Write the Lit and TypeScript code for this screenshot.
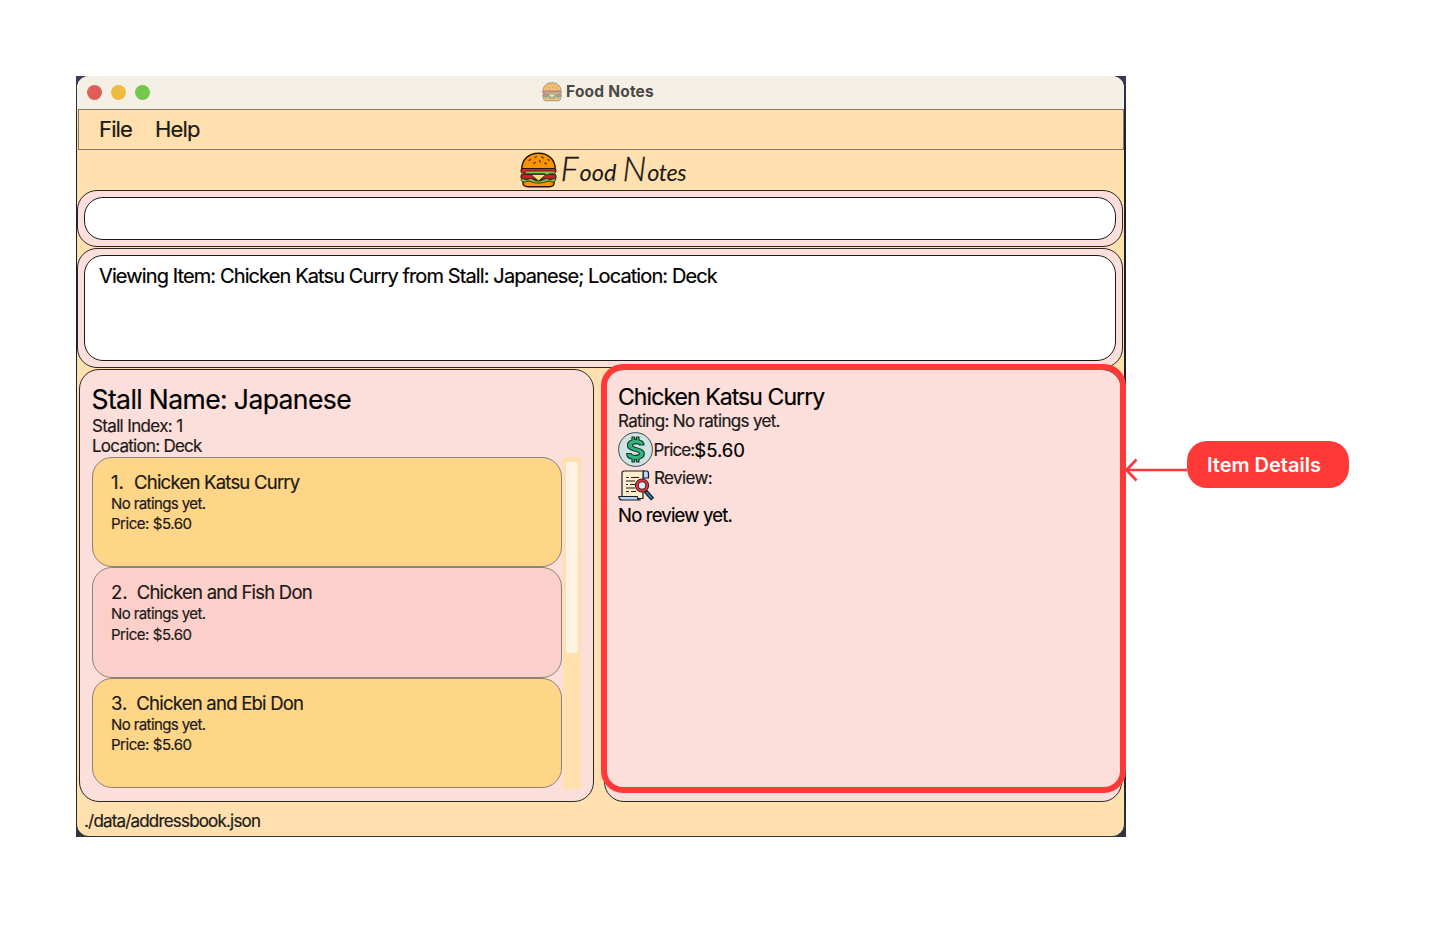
import { LitElement, html, css, svg } from "lit";
import { customElement } from "lit/decorators.js";

const burger = svg`
  <path d="M1.800 17C1.800 8 8 1.200 18.500 1.200S35.200 8 35.200 17Z" fill="#fb9200" stroke="#20160c" stroke-width="1.400"/>
  <path d="M9 8.500l1.600-1M15 5.500l1.400-.8M22 5l1.200 1M13.800 11.500l1.500-1M19.500 8.500l.8 1.400M25 11l1.300.9M28.200 7.500l.8.8" stroke="#4a2500" stroke-width="1.200" stroke-linecap="round"/>
  <rect x="1" y="16.500" width="35" height="4.500" rx="1.800" fill="#e3202f" stroke="#20160c" stroke-width="1"/>
  <rect x="1" y="22" width="35" height="5.300" rx="2" fill="#c5242f" stroke="#20160c" stroke-width="1"/>
  <path d="M8 19h25c3 0 3 2.800.5 2.800h-4c-1 0-1 1.200-2.500 1.200s-1.500-1.200-3-1.200H6c-2.500 0-1-2.800 2-2.800Z" fill="#7ccb4c" stroke="#20160c" stroke-width=".7"/>
  <path d="M3 28.500H34V31C34 33.500 32 34.700 29.500 34.700H7.500C5 34.700 3 33.500 3 31Z" fill="#fb9200" stroke="#20160c" stroke-width="1.400"/>
  <path d="M1.500 26.500c3 0 3 1.200 5 1.200s2-1.200 4-1.200 4 2.500 8 2.500 6-2.500 8-2.500 2 1.200 4 1.200 2-1.200 5-1.200c1 2-1 3.500-3 3.500s-2-1-4-1-4 2-10 2-8-2-10-2-2 1-4 1-4-1.500-3-3.500Z" fill="#7ccb4c" stroke="#20160c" stroke-width=".8"/>
  <path d="M11 22.500h15l-7.500 6.500Z" fill="#ffe07a" stroke="#20160c" stroke-width=".7"/>`;

interface Item { name: string; rating: string; price: string; }

@customElement("app-root")
export class AppRoot extends LitElement {
  private items: Item[] = [
    { name: "Chicken Katsu Curry", rating: "No ratings yet.", price: "Price: $5.60" },
    { name: "Chicken and Fish Don", rating: "No ratings yet.", price: "Price: $5.60" },
    { name: "Chicken and Ebi Don", rating: "No ratings yet.", price: "Price: $5.60" },
  ];

  static styles = css`
    :host { display: flex; box-sizing: border-box; width: 1451px; height: 940px; padding: 76px 0 0 76px; background: #fff; font-family: Inter, "Liberation Sans", sans-serif; color: #1c1a18; overflow: hidden; white-space: nowrap; }
    * { box-sizing: border-box; }
    svg { display: block; flex: none; }
    .stage { position: relative; width: 1050px; height: 761px; flex: none; padding: 0 2px 1px 1px; background: linear-gradient(#39395c, #1b1f29 60px, #1b1f29 680px, #30343d); }
    .window { display: flex; flex-direction: column; height: 760px; border-radius: 12px; overflow: hidden; background: #ffe0ae; }
    .titlebar { display: grid; grid-template-columns: 1fr auto 1fr; align-items: center; height: 33px; background: #f5f0e6; }
    .lights { display: flex; gap: 9px; padding-left: 9.500px; }
    .light { width: 15px; height: 15px; border-radius: 50%; }
    .red { background: #df5f58; } .amber { background: #eebb40; } .green { background: #75c74c; }
    .title { display: flex; align-items: center; gap: 4px; height: 31px; margin: 0 5px 2px 0; font-weight: 700; font-size: 15.500px; letter-spacing: .2px; color: #4b4946; }
    .faded { opacity: .5; }
    .menu { display: flex; gap: 23px; height: 41px; margin-left: 1px; padding-left: 20px; border: 1px solid #857a68; font-size: 22px; line-height: 39px; letter-spacing: -.85px; -webkit-text-stroke: .2px; }
    .brand { display: flex; justify-content: center; align-items: center; height: 40px; padding-left: 9px; }
    .script { display: flex; align-items: baseline; font-family: Lato, sans-serif; font-style: italic; font-weight: 400; line-height: 38px; width: 130px; margin: 3px 0 0 4px; }
    .big { font-size: 34px; font-weight: 300; -webkit-text-stroke: .3px; margin-right: 1px; }
    .low { font-size: 23.500px; }
    .food { width: 62px; }
    .otes { letter-spacing: -.5px; }
    .shell { border: 1px solid #2c2726; border-radius: 20px; background: #fcdeda; padding: 6px; margin-right: 1px; }
    .command { height: 57px; }
    .result { height: 120px; margin-top: 1px; }
    .field { height: 100%; border: 1px solid #1a1a1a; border-radius: 19px; background: #fff; color: #000; padding: 6px 14px; font-size: 20px; line-height: 28px; letter-spacing: -.89px; -webkit-text-stroke: .2px; }
    .panes { display: flex; gap: 10px; height: 434px; margin-top: 1px; padding: 0 2px; }
    .pane { border: 1px solid #2c2726; border-radius: 20px; background: #fcdeda; padding: 14px 12px 0; -webkit-text-stroke: .2px; }
    .stall { width: 515px; }
    .item { flex: 1; padding: 13px 13px 0; }
    .h1 { font-size: 26.500px; line-height: 31px; letter-spacing: -.6px; color: #000; margin-left: -.5px; }
    .meta { font-size: 17px; line-height: 20px; letter-spacing: -.65px; }
    .location { line-height: 21px; letter-spacing: -.74px; }
    .first { margin-top: 1px; }
    .list { display: flex; height: 332px; }
    .cards { width: 470px; }
    .card { height: 110.500px; border: 1px solid #8a8378; border-radius: 20px; padding: 12px 18px; background: #ffd587; }
    .alt { background: #fcd0ca; }
    .name { display: flex; gap: 9px; font-size: 18.500px; line-height: 24px; }
    .number { min-width: 14px; }
    .dish { letter-spacing: -.77px; }
    .small { font-size: 15px; line-height: 20.500px; letter-spacing: -.6px; }
    .cost { letter-spacing: -.46px; }
    .track { width: 18px; margin-left: 1px; padding: 5px 3px; background: #ffe0ae; }
    .thumb { height: 191px; width: 12px; border-radius: 3px; background: #fff3e3; }
    .h2 { font-size: 23px; line-height: 28px; letter-spacing: -.93px; color: #000; }
    .rating { font-size: 17px; line-height: 21px; letter-spacing: -.68px; }
    .row { display: flex; height: 36px; }
    .label { font-size: 17px; line-height: 21px; letter-spacing: -.62px; }
    .price { line-height: 36px; letter-spacing: -.9px; margin-left: -.5px; }
    .amount { font-size: 18.500px; line-height: 36px; color: #000; }
    .review { font-size: 18.500px; line-height: 22px; letter-spacing: -.8px; color: #000; }
    .status { height: 34px; padding-left: 7px; font-size: 17px; line-height: 38px; letter-spacing: -.82px; -webkit-text-stroke: .2px; }
    .frame { position: absolute; left: 525px; top: 288px; width: 525px; height: 429px; border: 6px solid #ff3838; border-radius: 22px; }
    .callout { display: flex; align-items: center; height: 47px; margin-top: 365px; }
    .arrow { margin: 10px 0 0 -1px; }
    .pill { width: 162px; height: 47px; border-radius: 20px; background: #ff3838; color: #fff; font-weight: 600; font-size: 20px; line-height: 48px; padding-left: 20px; }
  `;

  render() {
    return html`
      <div class="stage">
        <div class="window">
          <div class="titlebar">
            <div class="lights"><i class="light red"></i><i class="light amber"></i><i class="light green"></i></div>
            <div class="title"><svg class="faded" width="20" height="20" viewBox="0 0 37 37" fill="none">${burger}</svg><span>Food Notes</span></div>
          </div>
          <div class="menu"><span>File</span><span>Help</span></div>
          <div class="brand">
            <svg width="37" height="37" viewBox="0 0 37 37" fill="none">${burger}</svg>
            <div class="script"><span class="food"><span class="big">F</span><span class="low">ood</span></span><span><span class="big">N</span><span class="low otes">otes</span></span></div>
          </div>
          <div class="shell command"><div class="field"></div></div>
          <div class="shell result"><div class="field">Viewing Item: Chicken Katsu Curry from Stall: Japanese; Location: Deck</div></div>
          <div class="panes">
            <div class="pane stall">
              <div class="h1">Stall Name: Japanese</div>
              <div class="meta first">Stall Index: 1</div>
              <div class="meta location">Location: Deck</div>
              <div class="list">
                <div class="cards">${this.items.map((it, i) => html`
                  <div class="card ${i % 2 ? "alt" : ""}">
                    <div class="name"><span class="number">${i + 1}.</span><span class="dish">${it.name}</span></div>
                    <div class="small">${it.rating}</div>
                    <div class="small cost">${it.price}</div>
                  </div>`)}</div>
                <div class="track"><div class="thumb"></div></div>
              </div>
            </div>
            <div class="pane item">
              <div class="h2">Chicken Katsu Curry</div>
              <div class="rating">Rating: No ratings yet.</div>
              <div class="row">
                <svg width="36" height="36" viewBox="0 0 36 36" fill="none">
                  <circle cx="17.500" cy="17.500" r="16.900" fill="#cfe3e3" stroke="#3b4a4d"/>
                  <path d="M14 5h2.500v2.300h2V5H21v3c3 .5 5 2 5 5h-4.500c0-2-7-2-7 .5 0 3 11.800 1.500 11.800 8 0 3-2.300 5-5.300 5.500v3h-2.500v-2.500h-2V30H14v-3c-3.500-.5-5.300-2.500-5.300-5.500h4.500c0 2.500 8.300 2.500 8.300 0 0-3-12-1.500-12-8 0-3 2-5 4.500-5.500Z" fill="#2fb57c" stroke="#18382f" stroke-width="1.200" stroke-linejoin="round"/>
                </svg>
                <span class="label price">Price:</span><span class="amount">$5.60</span>
              </div>
              <div class="row">
                <svg width="36" height="36" viewBox="0 0 36 36" fill="none" stroke="#1d1d22" stroke-width="1.200" stroke-linejoin="round">
                  <path d="M25 3h3.500c2 0 2 1 2 2.500v4.500H25Z" fill="#b9d5f7"/>
                  <path d="M6 3H26c-1.500 1-1 3-1 5V30.500H4V9.500V5.500C4 4 4.500 3 6 3Z" fill="#fdeccb"/>
                  <path d="M.8 28.500h18.500c0 2 1 3.500 3 3.500H4c-2 0-3.200-1.500-3.200-3.500Z" fill="#b9d5f7"/>
                  <path d="M8 9.500h3M13 9.500h8M8 13h9M8 16.500h2M12 16.500h5M8 20h9M8 23.500h3M13 23.500h5"/>
                  <path d="M28.800 22.500l6.500 7.200-2.300 2-6.200-7.200Z" fill="#2f86b5"/>
                  <circle cx="24" cy="17.500" r="5.200" fill="#dcecfa" stroke="#1d1d22" stroke-width="3.800"/>
                  <circle cx="24" cy="17.500" r="5.200" stroke="#e2323f" stroke-width="2.200"/>
                </svg>
                <span class="label">Review:</span>
              </div>
              <div class="review">No review yet.</div>
            </div>
          </div>
          <div class="status">./data/addressbook.json</div>
        </div>
        <div class="frame"></div>
      </div>
      <div class="callout">
        <svg class="arrow" width="62" height="24" viewBox="0 0 62 24" fill="none" stroke="#ff3838" stroke-width="2.700"><path d="M1 12H62M11.500 1.500L1.500 12l10 10.500"/></svg>
        <div class="pill">Item Details</div>
      </div>`;
  }
}
